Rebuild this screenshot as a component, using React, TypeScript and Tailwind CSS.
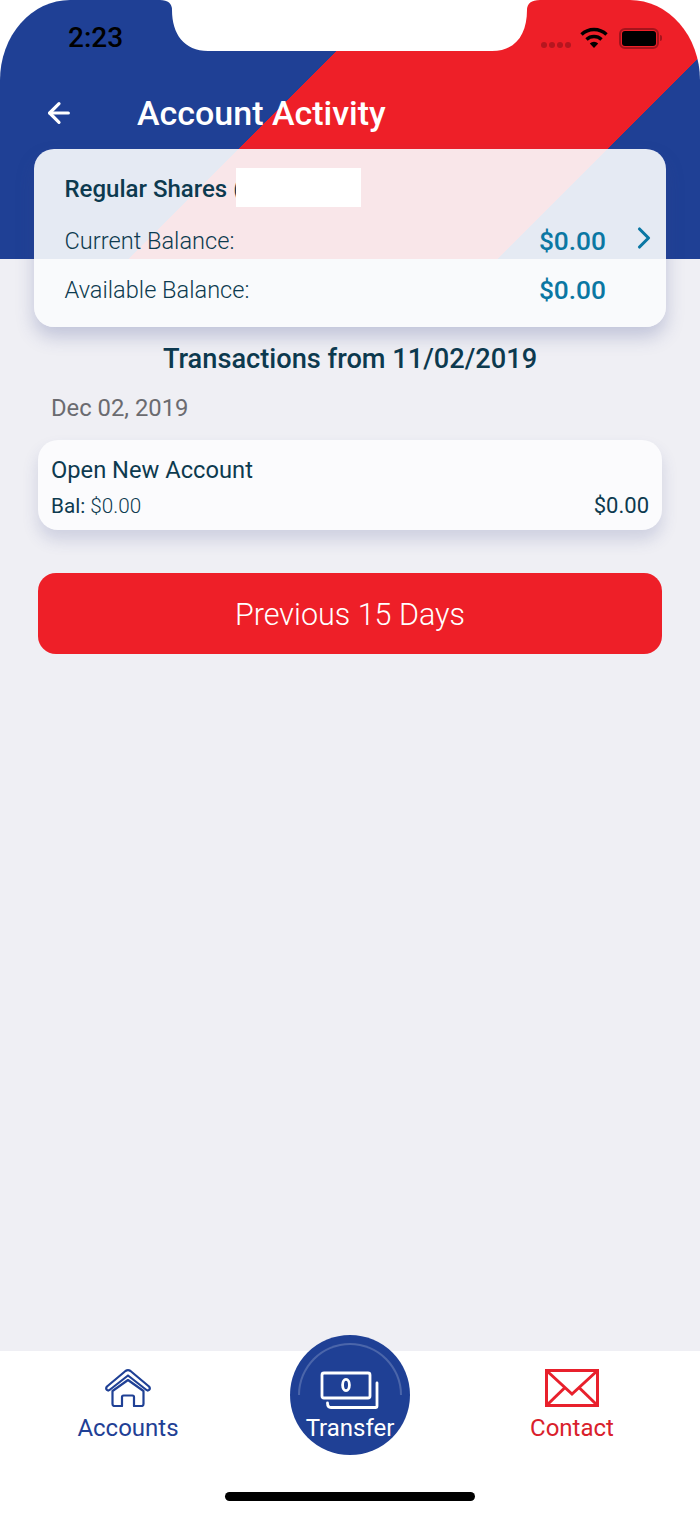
import { ArrowLeft, ChevronRight } from 'lucide-react'

function StatusIcons() {
  return (
    <div className="flex items-center">
      <div className="mt-[14px] mr-[9px] flex gap-[2px]">
        {[0, 1, 2, 3].map((i) => (
          <span key={i} className="h-[6px] w-[6px] rounded-full bg-[#b5161f]" />
        ))}
      </div>
      <svg width="28" height="22" viewBox="0 0 28 22" className="mr-[11px]">
        <path d="M1.5 7.5a18 18 0 0 1 25 0" fill="none" stroke="#000" strokeWidth="3.4" />
        <path d="M6.5 12.5a11 11 0 0 1 15 0" fill="none" stroke="#000" strokeWidth="3.4" />
        <path d="M14 21l-4.2-4.6a6 6 0 0 1 8.4 0z" fill="#000" />
      </svg>
      <div className="flex h-[21px] w-[40px] items-center justify-center rounded-[6px] border-2 border-[#a5141c]">
        <div className="h-[15px] w-[34px] rounded-[3px] bg-black" />
      </div>
      <div className="ml-[1px] h-[6px] w-[2px] rounded-r-full bg-[#a5141c]" />
    </div>
  )
}

function HomeIcon() {
  return (
    <svg width="46" height="38" viewBox="0 0 46 38" fill="none" stroke="#1f4095" strokeWidth="2.2" strokeLinejoin="round" strokeLinecap="round">
      <path d="M2 17.5 L20.5 2 Q23 0.4 25.5 2 L44 17.5 Q45.6 19.5 44 21 Q42.8 22 41.5 21 L23 6.5 L4.5 21 Q3.2 22 2 21 Q0.4 19.5 2 17.5Z" />
      <path d="M7.5 22 L23 11 L38.5 22 V35 Q38.5 37 36.5 37 H29 V28 Q29 26.5 27.5 26.5 H18.5 Q17 26.5 17 28 V37 H9.5 Q7.5 37 7.5 35Z" />
    </svg>
  )
}

function MoneyIcon() {
  return (
    <svg width="60" height="38" viewBox="0 0 60 38" fill="none" stroke="#fff" strokeWidth="2.8" strokeLinejoin="round" strokeLinecap="round">
      <rect x="2" y="2" width="48" height="25" rx="2" />
      <ellipse cx="26" cy="14" rx="3.4" ry="5.6" />
      <path d="M57 12 V35 Q57 36.5 55.5 36.5 H11 Q7.5 36.5 7.5 32" />
    </svg>
  )
}

function MailIcon() {
  return (
    <svg width="54" height="38" viewBox="0 0 54 38" fill="none" stroke="#e8202c" strokeWidth="3">
      <rect x="1.5" y="1.5" width="51" height="35" />
      <path d="M2 2 L27 25 L52 2" />
      <path d="M2 36 L20 18.5" />
      <path d="M52 36 L34 18.5" />
    </svg>
  )
}

function BalanceRow({ label, showChevron }: { label: string; showChevron?: boolean }) {
  return (
    <div className="relative flex items-center justify-between pr-[60px]">
      <span className="text-[23.6px] leading-[30px] font-light text-[#0d3a4f]">{label}</span>
      <span className="text-[26.3px] leading-[30px] font-medium text-[#0b77a3]">$0.00</span>
      {showChevron && (
        <ChevronRight className="absolute top-[-6px] right-[4px] text-[#0b77a3]" size={36} strokeWidth={2.1} />
      )}
    </div>
  )
}

export default function App() {
  return (
    <div className="flex h-[1515px] w-[700px] flex-col overflow-hidden bg-white font-['Roboto',sans-serif]">
      <header className="relative h-[259px] shrink-0 rounded-tl-[70px_80px] rounded-tr-[70px_80px] bg-[linear-gradient(135deg,#1f4095_274px,#ee1f28_274px,#ee1f28_535px,#1f4095_535px)]">
        {/* notch */}
        <svg className="absolute top-0 left-[160px]" width="380" height="52" viewBox="0 0 380 52">
          <path d="M0 0 Q12 0 12 10 C12 34 24 51 48 51 H332 C356 51 367 34 367 10 Q367 0 380 0Z" fill="#fff" />
        </svg>
        <div className="relative flex h-[76px] items-center justify-between pr-[38px] pl-[68px]">
          <span className="text-[28px] font-medium text-black">2:23</span>
          <StatusIcons />
        </div>
        <div className="mt-[12px] flex h-[50px] items-center pl-[43px]">
          <ArrowLeft className="text-white" size={32} strokeWidth={2.4} />
          <h1 className="ml-[62px] text-[34px] font-medium text-white">Account Activity</h1>
        </div>
      </header>

      <main className="flex flex-1 flex-col bg-[#efeff4] px-[38px]">
        <section className="relative z-10 mx-[-4px] mt-[-110px] h-[178px] rounded-[20px] bg-[#fafbfd]/[0.91] pt-[19px] pl-[30.5px] shadow-[0_10px_18px_rgba(60,70,140,0.25)]">
          <div className="flex h-[39px] items-center">
            <span className="mt-[3px] text-[24px] font-medium text-[#0d3a4f]">Regular Shares (</span>
            <div className="ml-[-5px] h-[39px] w-[125px] bg-white" />
          </div>
          <div className="mt-[19px]">
            <BalanceRow label="Current Balance:" showChevron />
          </div>
          <div className="mt-[19px]">
            <BalanceRow label="Available Balance:" />
          </div>
        </section>

        <h2 className="mt-[14px] text-center text-[27.2px] leading-[36px] font-medium text-[#0d3a4f]">
          Transactions from 11/02/2019
        </h2>
        <p className="mt-[15px] pl-[13px] text-[23.8px] leading-[32px] text-[#6b6b70]">Dec 02, 2019</p>

        <div className="mt-[16px] h-[90px] rounded-[20px] bg-[#fbfbfd] px-[13px] pt-[14px] shadow-[0_10px_16px_rgba(60,70,140,0.18)]">
          <p className="text-[23.7px] leading-[32px] text-[#0d3a4f]">Open New Account</p>
          <div className="mt-[6px] flex items-center justify-between leading-[28px] text-[#0d3a4f]">
            <span className="text-[20.7px]">
              Bal: <span className="font-light">$0.00</span>
            </span>
            <span className="text-[22px]">$0.00</span>
          </div>
        </div>

        <button className="mt-[43px] h-[81px] rounded-[18px] bg-[#ee1f28] pt-[2px] text-[30.5px] font-light text-white">
          Previous 15 Days
        </button>
      </main>

      <footer className="relative h-[164px] shrink-0 bg-white">
        <div className="grid grid-cols-[256px_188px_256px] pt-[18px]">
          <div className="flex flex-col items-center">
            <HomeIcon />
            <span className="mt-[3px] text-[24px] leading-[36px] text-[#1f4095]">Accounts</span>
          </div>
          <div className="flex justify-center">
            <div className="relative z-10 mt-[-34px] flex h-[120px] w-[120px] flex-col items-center rounded-full bg-[#1f4095] pt-[36px]">
              <div className="absolute top-[8px] right-[8px] left-[8px] h-[52px] rounded-t-full border-x-2 border-t-2 border-white/20" />
              <MoneyIcon />
              <span className="mt-[1px] text-[24px] leading-[36px] text-white">Transfer</span>
            </div>
          </div>
          <div className="flex flex-col items-center">
            <MailIcon />
            <span className="mt-[3px] text-[24px] leading-[36px] text-[#d9202b]">Contact</span>
          </div>
        </div>
        <div className="absolute bottom-[14px] left-[225px] h-[9px] w-[250px] rounded-full bg-black" />
      </footer>
    </div>
  )
}
